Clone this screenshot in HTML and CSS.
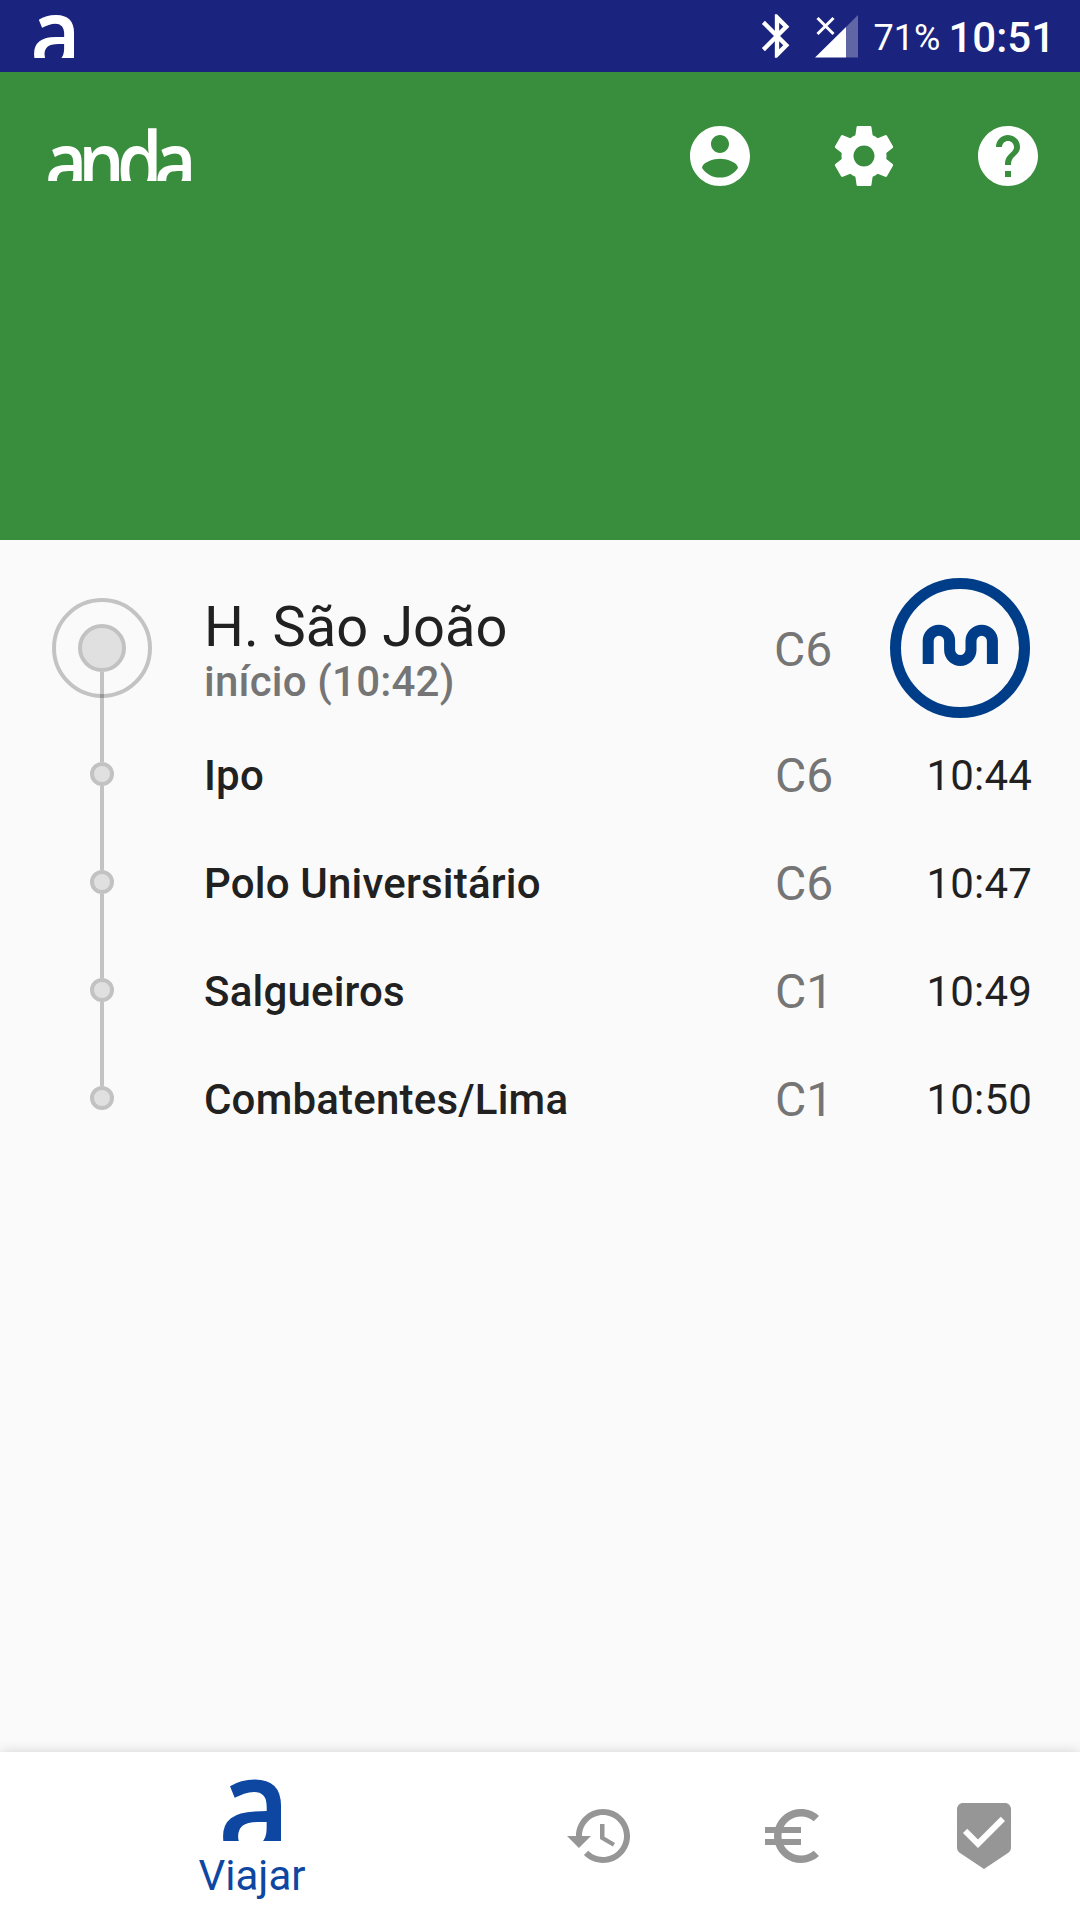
FILE: index.html
```html
<!DOCTYPE html>
<html lang="pt">
<head>
<meta charset="utf-8">
<title>anda</title>
<link rel="stylesheet" href="styles.css">
</head>
<body>
<div class="status">
  <svg class="status-logo" width="40" height="43" viewBox="0 0 58 62" preserveAspectRatio="none"><text class="mark" transform="translate(-5.500 80) scale(.88 1)">a</text></svg>
  <svg class="bluetooth" width="52" height="52" viewBox="0 0 24 24"><path d="M17.71 7.71L12 2h-1v7.59L6.41 5 5 6.41 10.59 12 5 17.59 6.41 19 11 14.41V22h1l5.71-5.71-4.3-4.29 4.3-4.29zM13 5.83l1.88 1.88L13 9.59V5.83zm1.88 10.46L13 18.17v-3.76l1.88 1.88z"/></svg>
  <svg class="signal" width="43" height="43" viewBox="0 0 43 43"><path opacity=".3" d="M31 12 43 0v42.500H31z"/><path d="M0 42.500 31 12v30.500z"/><path class="cross" d="M2.500 3 18.500 19M18.500 3 2.500 19"/></svg>
  <span class="battery">71%</span>
  <span class="clock">10:51</span>
</div>
<header class="header">
  <svg class="wordmark" width="143" height="55" viewBox="0 0 143 55"><text transform="scale(.86 1)" y="66.500" x="-3.500 35.100 80.200 123.600">anda</text></svg>
  <nav class="actions">
    <svg class="icon" viewBox="0 0 24 24"><path d="M12 2C6.480 2 2 6.480 2 12s4.480 10 10 10 10-4.480 10-10S17.520 2 12 2zm0 3c1.660 0 3 1.340 3 3s-1.340 3-3 3-3-1.340-3-3 1.340-3 3-3zm0 14.200c-2.500 0-4.710-1.280-6-3.220.03-1.990 4-3.080 6-3.080 1.990 0 5.970 1.090 6 3.080-1.290 1.940-3.500 3.220-6 3.220z"/></svg>
    <svg class="icon" viewBox="0 0 24 24"><path d="M19.430 12.980c.04-.32.07-.64.07-.98s-.03-.66-.07-.98l2.110-1.650c.19-.15.24-.42.12-.64l-2-3.460c-.12-.22-.39-.3-.61-.22l-2.490 1c-.52-.4-1.080-.73-1.690-.98l-.38-2.650C14.460 2.180 14.250 2 14 2h-4c-.25 0-.46.18-.49.42l-.38 2.650c-.61.25-1.170.59-1.690.98l-2.490-1c-.23-.09-.49 0-.61.22l-2 3.460c-.13.22-.07.49.12.64l2.110 1.650c-.04.32-.07.65-.07.98s.03.66.07.98l-2.110 1.650c-.19.15-.24.42-.12.64l2 3.460c.12.22.39.3.61.22l2.490-1c.52.4 1.080.73 1.690.98l.38 2.650c.03.24.24.42.49.42h4c.25 0 .46-.18.49-.42l.38-2.650c.61-.25 1.170-.59 1.690-.98l2.490 1c.23.09.49 0 .61-.22l2-3.460c.12-.22.07-.49-.12-.64l-2.110-1.650zM12 15.500c-1.930 0-3.500-1.570-3.500-3.500s1.570-3.500 3.500-3.500 3.500 1.570 3.500 3.500-1.570 3.500-3.500 3.500z"/></svg>
    <svg class="icon" viewBox="0 0 24 24"><path d="M12 2C6.480 2 2 6.480 2 12s4.480 10 10 10 10-4.480 10-10S17.520 2 12 2zm1 17h-2v-2h2v2zm2.070-7.750l-.9.920C13.450 12.900 13 13.500 13 15h-2v-.5c0-1.100.45-2.100 1.170-2.830l1.240-1.260c.37-.36.59-.86.59-1.410 0-1.100-.9-2-2-2s-2 .9-2 2H8c0-2.210 1.790-4 4-4s4 1.790 4 4c0 .88-.36 1.680-.93 2.250z"/></svg>
  </nav>
</header>
<main class="trip">
  <svg class="timeline" width="204" height="576" viewBox="0 0 204 576">
    <g class="dots"><circle cx="102" cy="72" r="22"/><circle cx="102" cy="198" r="10"/><circle cx="102" cy="306" r="10"/><circle cx="102" cy="414" r="10"/><circle cx="102" cy="522" r="10"/></g>
    <circle class="track" cx="102" cy="72" r="48"/>
    <path class="track" d="M102 96V186M102 210V294M102 318V402M102 426V510"/>
  </svg>
  <ul class="stops">
    <li class="stop first">
      <div class="place"><div class="title">H. São João</div><div class="start">início (10:42)</div></div>
      <span class="line">C6</span>
      <svg class="metro" width="140" height="140" viewBox="0 0 140 140"><circle cx="70" cy="70" r="64.500"/><path d="M38.200 86V63a10.700 10.700 0 0 1 21.400 0V71.700a10.700 10.700 0 0 0 21.400 0V63a10.700 10.700 0 0 1 21.400 0V86"/></svg>
    </li>
    <li class="stop"><span class="place">Ipo</span><span class="line">C6</span><time class="time">10:44</time></li>
    <li class="stop"><span class="place">Polo Universitário</span><span class="line">C6</span><time class="time">10:47</time></li>
    <li class="stop"><span class="place">Salgueiros</span><span class="line">C1</span><time class="time">10:49</time></li>
    <li class="stop"><span class="place">Combatentes/Lima</span><span class="line">C1</span><time class="time">10:50</time></li>
  </ul>
</main>
<nav class="tabs">
  <div class="tab active">
    <svg width="58" height="62" viewBox="0 0 58 62"><text class="mark" transform="translate(-5.500 80) scale(.88 1)">a</text></svg>
    <span>Viajar</span>
  </div>
  <div class="tab"><svg class="icon" viewBox="0 0 24 24"><path d="M13 3c-4.970 0-9 4.030-9 9H1l3.890 3.890.07.14L9 12H6c0-3.870 3.130-7 7-7s7 3.130 7 7-3.130 7-7 7c-1.930 0-3.680-.79-4.940-2.060l-1.420 1.420C8.270 19.990 10.510 21 13 21c4.970 0 9-4.030 9-9s-4.030-9-9-9zm-1 5v5l4.280 2.540.72-1.210-3.500-2.080V8H12z"/></svg></div>
  <div class="tab"><svg class="icon" viewBox="0 0 24 24"><path d="M15 18.500c-2.510 0-4.680-1.420-5.760-3.500H15v-2H8.580c-.05-.33-.08-.66-.08-1s.03-.67.08-1H15V9H9.240C10.320 6.920 12.500 5.500 15 5.500c1.610 0 3.090.59 4.230 1.570L21 5.300C19.410 3.870 17.300 3 15 3c-3.920 0-7.240 2.510-8.480 6H3v2h3.060c-.04.33-.06.66-.06 1s.02.67.06 1H3v2h3.520c1.240 3.490 4.560 6 8.480 6 2.310 0 4.410-.87 6-2.300l-1.780-1.770c-1.130.98-2.600 1.570-4.220 1.570z"/></svg></div>
  <div class="tab"><svg class="icon" viewBox="0 0 24 24"><path d="M19 1H5c-1.100 0-1.990.9-1.990 2L3 15.930c0 .69.35 1.300.88 1.660L12 23l8.110-5.410c.53-.36.88-.97.88-1.660L21 3c0-1.100-.9-2-2-2zm-9 15l-5-5 1.410-1.410L10 13.170l7.590-7.590L19 7l-9 9z"/></svg></div>
</nav>
</body>
</html>
```
FILE: styles.css
```css
* { box-sizing: border-box; }
body {
  margin: 0;
  width: 1080px;
  height: 1920px;
  display: flex;
  flex-direction: column;
  background: #fafafa;
  color: #212121;
  font-family: Roboto, sans-serif;
  font-size: 42px;
  overflow: hidden;
}
svg { display: block; flex: none; fill: currentColor; }
.icon { width: 72px; height: 72px; }
.mark { font: 600 144px "Open Sans", sans-serif; }

.status {
  height: 72px;
  display: flex;
  align-items: center;
  padding: 0 25px 0 34px;
  background: #1a237e;
  color: #fff;
  white-space: nowrap;
}
.bluetooth { margin-left: auto; }
.signal { margin-left: 12px; }
.signal .cross { fill: none; stroke: #fff; stroke-width: 3; }
.battery { width: 75px; margin-left: 15px; padding-top: 3px; font-size: 36px; }
.clock { padding-top: 3px; font-weight: 500; }

.header {
  height: 468px;
  display: flex;
  align-items: flex-start;
  justify-content: space-between;
  padding: 48px 36px 0 48px;
  background: #388e3c;
  color: #fff;
}
.wordmark { margin-top: 6px; font: 600 85px "Open Sans", sans-serif; }
.actions { display: flex; gap: 72px; }

.trip { flex: 1; display: flex; align-items: flex-start; padding-top: 36px; }
.timeline .dots { fill: #e0e0e0; stroke: #c2c2c2; stroke-width: 4; }
.timeline .track { fill: none; stroke: #000; stroke-opacity: .22; stroke-width: 4; }
.stops { flex: 1; margin: 0; padding: 0; list-style: none; }
.stop {
  height: 108px;
  display: grid;
  grid-template-columns: 571px 1fr auto;
  align-items: center;
  padding-right: 48px;
  line-height: 50px;
}
.stop.first { height: 144px; grid-template-columns: 570px 1fr auto; padding-right: 50px; }
.place { font-weight: 500; padding-top: 3px; letter-spacing: .2px; }
.first .place { padding-top: 7px; }
.title { font-size: 56px; font-weight: 400; line-height: 60px; letter-spacing: 0; }
.start { color: #757575; line-height: 50px; }
.line { font-size: 48px; color: #757575; padding-top: 3px; }
.time { padding-top: 3px; letter-spacing: .2px; }
.metro { fill: none; stroke: #003d88; stroke-width: 11; }

.tabs {
  height: 168px;
  display: flex;
  background: #fff;
  color: #969696;
  box-shadow: 0 0 12px rgba(0, 0, 0, .16);
}
.tab { width: 192px; display: flex; justify-content: center; align-items: center; }
.tab.active {
  width: 504px;
  flex-direction: column;
  justify-content: flex-start;
  padding-top: 27px;
  gap: 10px;
  color: #0d47a1;
}
```
